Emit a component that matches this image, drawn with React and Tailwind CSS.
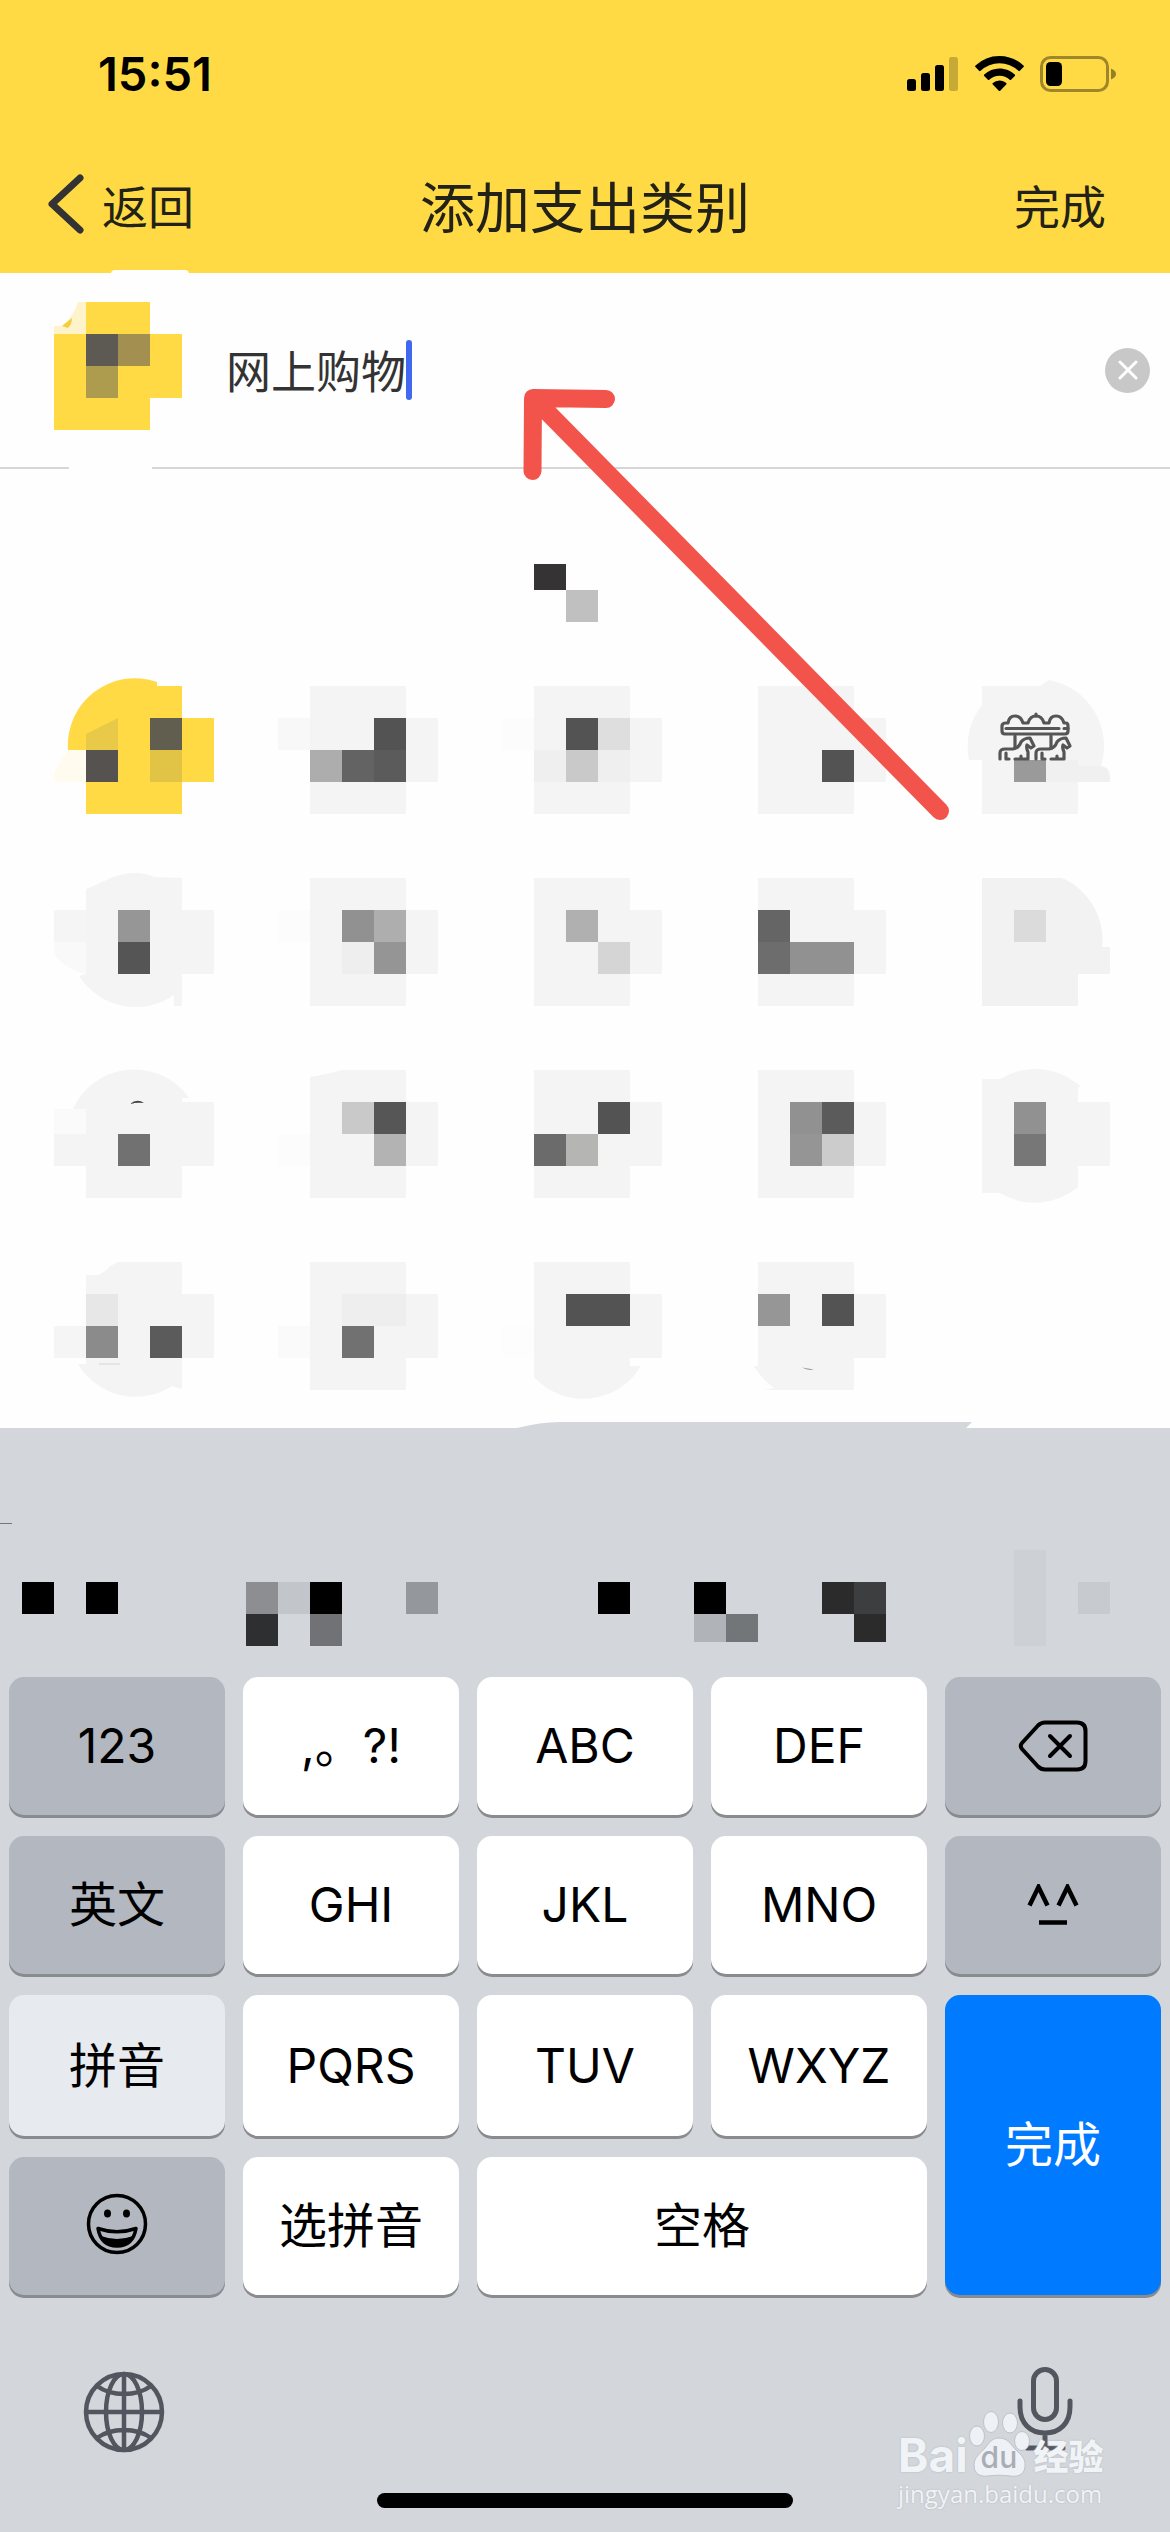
import React, { useState } from "react";

const LATIN = "font-['Inter','Noto_Sans_CJK_SC',sans-serif]";

/* Category tiles: each tile is a 7 x 6 board of 32px cells. */
const BODY = "M64 32H160V64H192V128H160V160H64Z";
const BASE = "#f4f4f4";

const TILES = [
  {
    base: "#ffda44",
    body: "M46 96A67 67 0 0 1 135 28V32H160V64H192V128H160V160H64V96Z",
    cells: [[4, 2, "#615d4f"], [4, 3, "#e1c345"], [2, 3, "#565250"]],
    extra: (
      <>
        <path d="M64 80L96 64V96H64Z" fill="#e9ca48" />
        <path d="M46 96H64V128H32V118Z" fill="#fffbee" />
      </>
    ),
  },
  { cells: [[1, 2, "#f8f8f8"], [4, 2, "#535353"], [2, 3, "#adadad"], [3, 3, "#636363"], [4, 3, "#5b5b5b"]] },
  { cells: [[1, 2, "#fcfcfc"], [3, 2, "#535353"], [4, 2, "#dedede"], [2, 3, "#efefef"], [3, 3, "#c9c9c9"], [4, 3, "#efefef"]] },
  { cells: [[4, 3, "#535353"]] },
  {
    body: "M64 32H122L131 26A67 67 0 0 1 183 112Q192 113 192 122V128H160V160H64V106H51A67 67 0 0 1 64 51Z",
    cells: [],
    extra: (
      <>
        <path d="M128 106H160V112H183Q192 114 192 128H128Z" fill="#f0f0f0" />
        <path d="M96 106H128V128H96Z" fill="#9a9a9a" />
        <g fill="none" stroke="#555" strokeWidth="3.2" strokeLinecap="round" strokeLinejoin="round">
          <path d="M88 69H90Q91 62 97 62T105 69H110Q112 62 118 62T126 69H131Q132 62 138 62T146 69H148Q150 69 150 72V77Q150 80 147 80H87Q84 80 84 77V72Q84 69 88 69Z" />
          <path d="M118 62V60M88 74.500H141M146 74.500H150" />
          <path d="M97 82V94M133 82V94" />
          <path d="M82 105V99Q82 95 87 95H95Q101 94 103 88Q106 84 112 84Q114 88 116 92L113 94L109 91Q108 94 110 98V105H105M88 99V105H91M97 105H103V102" />
          <path d="M118 105V99Q118 95 123 95H131Q137 94 139 88Q142 84 148 84Q150 88 152 92L149 94L145 91Q144 94 146 98V105H141M124 99V105H127M133 105H139V102" />
        </g>
      </>
    ),
  },
  {
    body: "M64 43Q72 40 80 36Q97 27 113 27Q124 27 132 31L160 32V64H192V128H160V160H152V149A67 67 0 0 1 57 130L64 128Z",
    cells: [[1, 2, "#f5f5f5"], [3, 2, "#969696"], [3, 3, "#555555"]],
    extra: <path d="M32 96H64V128L57 126Q40 120 32 108Z" fill="#f9f9f9" />,
  },
  { cells: [[1, 2, "#fcfcfc"], [3, 2, "#919191"], [4, 2, "#aeaeae"], [3, 3, "#eeeeee"], [4, 3, "#959595"]] },
  { cells: [[3, 2, "#b0b0b0"], [4, 3, "#d5d5d5"]] },
  { cells: [[2, 2, "#656565"], [2, 3, "#6d6d6d"], [3, 3, "#919191"], [4, 3, "#919191"]] },
  {
    base: "#f2f2f2",
    body: "M64 32H144A67 67 0 0 1 184 101H192V128H160V160H64Z",
    cells: [[3, 2, "#dbdbdb"]],
  },
  {
    body: "M51 71A67 67 0 0 1 167 60H160V64H192V128H160V160H64V128H32V96H64V71Z",
    cells: [[3, 3, "#717171"]],
    extra: (
      <>
        <path d="M32 71H64V96H32Z" fill="#fafafa" />
        <path d="M108 66Q115 60 122 65Q114 64 108 66Z" fill="#444" />
      </>
    ),
  },
  {
    body: "M64 39Q82 36 96 32H160V64H192V128H160V160H64Z",
    cells: [[3, 2, "#c9c9c9"], [4, 2, "#565656"], [4, 3, "#b3b3b3"], [1, 3, "#fcfcfc"]],
  },
  { cells: [[4, 2, "#535353"], [2, 3, "#6b6b6b"], [3, 3, "#b5b5b3"]] },
  { cells: [[3, 2, "#919191"], [4, 2, "#5b5b5b"], [3, 3, "#959595"], [4, 3, "#cccccc"]] },
  {
    body: "M64 41H82A67 67 0 0 1 163 49H160V64H192V128H160V149A67 67 0 0 1 82 155H64Z",
    cells: [[3, 2, "#919191"], [3, 3, "#777777"]],
  },
  {
    body: "M64 45H76L82 42Q90 34 96 32H160V64H192V128H160V159L150 156A67 67 0 0 1 56 134H64Z",
    cells: [[1, 3, "#f5f5f5"], [2, 2, "#e7e7e7"], [2, 3, "#8b8b8b"], [4, 3, "#5b5b5b"]],
    extra: <path d="M77 133H98V135H77Z" fill="#e4e4e4" />,
  },
  { cells: [[1, 3, "#fafafa"], [3, 2, "#eeeeee"], [4, 2, "#eeeeee"], [3, 3, "#717171"]] },
  {
    body: "M64 32H160V64H192V128H160V136H171A67 67 0 0 1 64 147Z",
    cells: [[3, 2, "#535353"], [4, 2, "#535353"], [1, 3, "#fdfdfd"]],
  },
  {
    body: "M64 32H160V64H192V128H160V160H70L80 158Q68 150 60 136H64Z",
    cells: [[2, 2, "#969696"], [4, 2, "#535353"]],
    extra: <path d="M108 137.500L120 139.500Q114 141 108 137.500Z" fill="#999" />,
  },
];

function Tile({ base = BASE, body = BODY, cells, extra }) {
  return (
    <svg viewBox="0 0 224 192" className="block w-full" aria-hidden="true">
      <path d={body} fill={base} />
      {cells.map(([i, j, fill]) => (
        <rect key={i + "-" + j} x={i * 32} y={j * 32} width="32" height="32" fill={fill} shapeRendering="crispEdges" />
      ))}
      {extra}
    </svg>
  );
}

function StatusBar() {
  return (
    <div className="flex items-center justify-between pt-[46px] pr-[54px] pl-[98px]">
      <span className={`${LATIN} text-[47px] leading-14 font-semibold text-black`}>15:51</span>
      <div className="flex items-center gap-4">
        <svg width="52" height="36" viewBox="0 0 52 36" aria-label="信号">
          <rect x="0" y="23" width="9" height="12" rx="2.500" />
          <rect x="14" y="17" width="9" height="18" rx="2.500" />
          <rect x="28" y="9" width="9" height="26" rx="2.500" />
          <rect x="42" y="1" width="9" height="34" rx="2.500" opacity=".22" />
        </svg>
        <svg width="49" height="36" viewBox="0 0 49 36" aria-label="无线网络">
          <path d="M24.500 0C33.800 0 42.300 3.600 48.500 9.600a1 1 0 0 1 0 1.500l-3.600 3.700a1 1 0 0 1-1.500 0A27.200 27.200 0 0 0 5.600 14.800a1 1 0 0 1-1.500 0L.5 11.100a1 1 0 0 1 0-1.500A34.500 34.500 0 0 1 24.500 0Z" />
          <path d="M24.500 12.500c5.900 0 11.300 2.300 15.300 6a1 1 0 0 1 0 1.500l-3.700 3.700a1 1 0 0 1-1.400 0 15 15 0 0 0-20.400 0 1 1 0 0 1-1.400 0L9.200 20a1 1 0 0 1 0-1.500 22.500 22.500 0 0 1 15.300-6Z" />
          <path d="M24.500 24.600c2.600 0 4.900.9 6.700 2.500a1 1 0 0 1 0 1.500l-6 6.100a1 1 0 0 1-1.400 0l-6-6.100a1 1 0 0 1 0-1.500 10 10 0 0 1 6.700-2.500Z" />
        </svg>
        <svg width="76" height="36" viewBox="0 0 76 36" aria-label="电池">
          <rect x="1.500" y="1.500" width="66" height="33" rx="9" fill="none" stroke="#000" strokeOpacity=".38" strokeWidth="3" />
          <rect x="6" y="6" width="16" height="24" rx="4.500" />
          <path d="M71 12.500C74.600 14 76 16 76 18S74.600 22 71 23.500Z" opacity=".42" />
        </svg>
      </div>
    </div>
  );
}

function NavBar() {
  return (
    <nav className="grid grid-cols-[1fr_auto_1fr] items-center px-[48px] pt-[62px] pb-[29px] text-[46px] leading-[80px] text-[#222218]">
      <button type="button" className="flex items-center gap-[18px] justify-self-start">
        <svg width="36" height="60" viewBox="0 0 36 60" fill="none" stroke="#333" strokeWidth="7" strokeLinecap="round" strokeLinejoin="round" aria-hidden="true">
          <path d="M32 4L4 30L32 56" />
        </svg>
        返回
      </button>
      <h1 className="text-[55px] font-normal">添加支出类别</h1>
      <button type="button" className="mr-[16px] justify-self-end">完成</button>
    </nav>
  );
}

function NameRow() {
  const [name, setName] = useState("网上购物");
  return (
    <div className="relative flex items-center pt-[29px] pr-[20px] pb-[37px] pl-[54px]">
      <span className="absolute -top-[3px] left-[111px] h-[6px] w-[78px] rounded-t-sm bg-[#fefefe]" />
      <svg width="128" height="128" viewBox="0 0 128 128" className="shrink-0" aria-hidden="true">
        <path d="M32 0H96V32H128V96H96V128H0V32H32Z" fill="#ffda44" />
        <path d="M24 0H32V32H0V24H8Q20 14 24 0Z" fill="#fff3cb" />
        <path d="M18 16L8 24L14 26Q18 22 18 16Z" fill="#f2cf3e" />
        <g shapeRendering="crispEdges">
          <path d="M32 32H64V64H32Z" fill="#5d5a53" />
          <path d="M64 32H96V64H64Z" fill="#a38f4f" />
          <path d="M32 64H64V96H32Z" fill="#ae9c4e" />
        </g>
      </svg>
      <div className="ml-[44px] flex grow items-center pt-[8px]">
        <input
          aria-label="类别名称"
          value={name}
          onChange={(e) => setName(e.target.value)}
          className="w-[180px] bg-transparent p-0 text-[45px] leading-[60px] text-[#333] outline-none"
        />
        <span className="h-[60px] w-[6px] rounded-full bg-[#4169f0]" />
      </div>
      <button type="button" aria-label="清除" className="mt-[8px] flex size-[45px] items-center justify-center rounded-full bg-[#c8c8c8]">
        <svg width="20" height="20" viewBox="0 0 20 20" stroke="#fff" strokeWidth="3" strokeLinecap="round" aria-hidden="true">
          <path d="M2 2L18 18M18 2L2 18" />
        </svg>
      </button>
    </div>
  );
}

function Arrow() {
  return (
    <svg width="440" height="440" viewBox="0 0 440 440" className="pointer-events-none absolute top-[385px] left-[520px]" fill="none" stroke="#f2544b" strokeWidth="18" strokeLinecap="round" strokeLinejoin="round" aria-hidden="true">
      <path d="M86 14L13 13L12.500 86M13.500 13L420 426" />
    </svg>
  );
}

const SUGGESTION_CELLS = [
  [22, 32, 32, "#000"], [86, 32, 32, "#000"], [246, 32, 32, "#8c8e91"], [278, 32, 32, "#c2c5c9"],
  [310, 32, 32, "#000"], [246, 64, 32, "#2d2f31"], [310, 64, 32, "#707276"], [406, 32, 32, "#94979b"],
  [598, 32, 32, "#000"], [694, 32, 32, "#000"], [694, 64, 28, "#b0b3b7"], [726, 64, 28, "#737679"],
  [822, 32, 32, "#2b2b2b"], [854, 32, 32, "#3d3e40"], [854, 64, 28, "#2b2b2b"],
  [1014, 0, 96, "#cdd0d4"], [1078, 32, 32, "#c7cace"],
];

const TONES = {
  light: "bg-white text-black",
  dark: "bg-[#b2b7c0] text-black",
  soft: "bg-[#e7eaef] text-black",
  blue: "bg-[#007aff] text-white",
};

function Key({ tone = "light", span = "", label, children }) {
  return (
    <button
      type="button"
      aria-label={label}
      className={`flex items-center justify-center rounded-[15px] shadow-[0_3px_0_#898b8f] ${LATIN} text-[48px] ${TONES[tone]} ${span}`}
    >
      {children}
    </button>
  );
}

function Keys() {
  return (
    <div className="grid grid-cols-5 grid-rows-[138px_138px_141px_138px] gap-x-[18px] gap-y-[21px] px-[9px]">
      <Key tone="dark">123</Key>
      <Key>,。?!</Key>
      <Key>ABC</Key>
      <Key>DEF</Key>
      <Key tone="dark" label="删除">
        <svg width="70" height="52" viewBox="0 0 70 52" fill="none" stroke="#000" strokeWidth="4" strokeLinecap="round" strokeLinejoin="round" aria-hidden="true">
          <path d="M27 2.500H59Q67.500 2.500 67.500 11V41Q67.500 49.500 59 49.500H27Q23 49.500 20 46.500L4 29Q1.500 26 4 23L20 5.500Q23 2.500 27 2.500Z" />
          <path d="M32 16L52 36M52 16L32 36" />
        </svg>
      </Key>

      <Key tone="dark">英文</Key>
      <Key>GHI</Key>
      <Key>JKL</Key>
      <Key>MNO</Key>
      <Key tone="dark" label="表情符号">
        <svg width="52" height="42" viewBox="0 0 52 42" fill="none" stroke="#000" strokeWidth="4.500" aria-hidden="true">
          <path d="M2.500 21.500L11.500 3L20.500 21.500M31.500 21.500L40.500 3L49.500 21.500M12 38.500H40" />
        </svg>
      </Key>

      <Key tone="soft">拼音</Key>
      <Key>PQRS</Key>
      <Key>TUV</Key>
      <Key>WXYZ</Key>
      <Key tone="blue" span="row-span-2">完成</Key>

      <Key tone="dark" label="表情">
        <svg width="62" height="70" viewBox="0 0 62 70" fill="none" stroke="#000" strokeWidth="3.500" aria-hidden="true">
          <circle cx="31" cy="33" r="28.500" />
          <ellipse cx="21.500" cy="22.500" rx="3.500" ry="4" fill="#000" stroke="none" />
          <ellipse cx="40.500" cy="22.500" rx="3.500" ry="4" fill="#000" stroke="none" />
          <path d="M12 37.500Q31 44 50 37.500Q47 55 31 55Q15 55 12 37.500Z" strokeLinejoin="round" />
          <path d="M15 45Q31 51 47 45Q43 55 31 55Q19 55 15 45Z" fill="#000" stroke="none" />
        </svg>
      </Key>
      <Key>选拼音</Key>
      <Key span="col-span-2">空格</Key>
    </div>
  );
}

function Watermark() {
  return (
    <div className="absolute right-[60px] bottom-[22px] w-[212px] font-['Open_Sans','Noto_Sans_CJK_SC',sans-serif] text-[#f1f4f7] [text-shadow:0_0_2px_#aeb2b8]">
      <div className="flex items-end">
        <span className="font-['Inter',sans-serif] text-[46px] leading-[46px] font-bold">Bai</span>
        <span className="relative h-[68px] w-[62px] shrink-0">
          <svg width="62" height="68" viewBox="0 0 62 68" className="absolute" fill="#eef1f5" stroke="#bfc3c9" strokeWidth="1" aria-hidden="true">
            <ellipse cx="9" cy="26" rx="7.500" ry="10" />
            <ellipse cx="23" cy="12" rx="7.500" ry="10.500" />
            <ellipse cx="42" cy="13" rx="7.500" ry="10" />
            <ellipse cx="54" cy="31" rx="7.500" ry="9.500" />
            <path d="M31 28C39 28 42 33 47 39C53 45 58 48 57 57C56 66 48 67 42 66C35 65 27 65 20 66C12 67 6 64 6 55C6 47 12 44 17 38C21 33 24 28 31 28Z" />
          </svg>
          <span className="absolute bottom-[6px] left-[13px] font-['Inter',sans-serif] text-[30px] leading-[30px] font-medium text-[#a9aeb6] [text-shadow:none]">du</span>
        </span>
        <span className="ml-[4px] text-[35px] leading-[42px] font-black whitespace-nowrap">经验</span>
      </div>
      <div className="text-[24px] leading-[32px]">jingyan.baidu.com</div>
    </div>
  );
}

function Keyboard() {
  return (
    <div className="relative grow bg-[#d3d7dc] pt-[122px] pb-[24px]">
      <svg viewBox="0 0 1170 8" className="absolute -top-[6px] left-0 block w-full" aria-hidden="true">
        <path d="M517 6Q540 0 560 0H972L966 6V8H517Z" fill="#d3d7dc" />
      </svg>
      <span className="absolute top-[95px] left-0 h-px w-[12px] bg-[#777]" />
      <svg viewBox="0 0 1170 96" className="mb-[31px] block w-full" shapeRendering="crispEdges" aria-hidden="true">
        {SUGGESTION_CELLS.map(([x, y, h, fill]) => (
          <rect key={x + "-" + y} x={x} y={y} width="32" height={h} fill={fill} />
        ))}
      </svg>
      <Keys />
      <div className="flex items-start justify-between pt-[72px] pr-[97px] pl-[83px]">
        <button type="button" aria-label="切换键盘" className="mt-[4px]">
          <svg width="82" height="82" viewBox="0 0 82 82" fill="none" stroke="#52565e" strokeWidth="4.500" aria-hidden="true">
            <circle cx="41" cy="41" r="38" />
            <ellipse cx="41" cy="41" rx="18" ry="38" />
            <path d="M41 3V79M3 41H79M14 15Q25 23 41 23T68 15M14 67Q25 59 41 59T68 67" />
          </svg>
        </button>
        <button type="button" aria-label="语音输入">
          <svg width="56" height="86" viewBox="0 0 56 86" fill="none" stroke="#52565e" strokeWidth="5" strokeLinecap="round" aria-hidden="true">
            <rect x="16.500" y="2.500" width="23" height="50" rx="11.500" />
            <path d="M3 34V40C3 56 13 66 28 66S53 56 53 40V34M28 66V81M10 81H46" />
          </svg>
        </button>
      </div>
      <div className="mx-auto mt-[40px] h-[15px] w-[416px] rounded-full bg-black" />
      <Watermark />
    </div>
  );
}

export default function App() {
  return (
    <div className="relative flex min-h-screen w-full flex-col overflow-hidden bg-[#fefefe] font-['Noto_Sans_CJK_SC',sans-serif]">
      <header className="bg-[#ffda44]">
        <StatusBar />
        <NavBar />
      </header>
      <NameRow />
      <div className="flex h-[2px] w-full">
        <span className="w-[69px] bg-[#d6d6d6]" />
        <span className="w-[83px]" />
        <span className="grow bg-[#d6d6d6]" />
      </div>
      <main className="pt-[94px] pb-[6px]">
        <svg width="102" height="59" viewBox="0 0 102 59" className="mx-auto block" shapeRendering="crispEdges" aria-hidden="true">
          <path d="M0 1H32V27H0Z" fill="#353333" />
          <path d="M32 27H64V59H32Z" fill="#c0c0c0" />
        </svg>
        <div className="grid grid-cols-5 pt-[32px] pr-[28px] pl-[22px]">
          {TILES.map((tile, i) => (
            <button type="button" key={i} aria-label={`类别 ${i + 1}`}>
              <Tile {...tile} />
            </button>
          ))}
        </div>
      </main>
      <Keyboard />
      <Arrow />
    </div>
  );
}
